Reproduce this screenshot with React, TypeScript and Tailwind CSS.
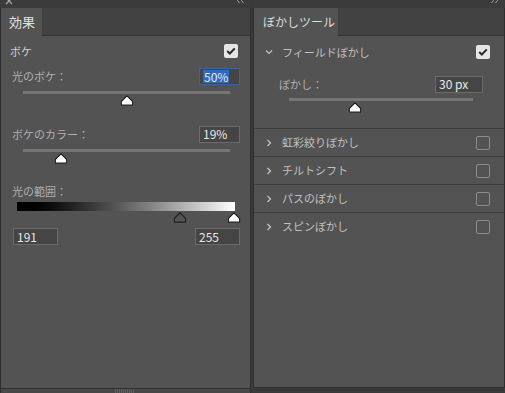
import React from "react";

const font = { fontFamily: '"Noto Sans CJK JP", "Noto Sans", sans-serif' };

const Thumb = ({ dark = false }: { dark?: boolean }) => (
  <svg width="13" height="11" viewBox="0 0 13 11">
    <path
      d="M6.5 0.8 L11.8 6.2 Q12.2 6.7 12.2 7.4 L12.2 9.4 Q12.2 10.2 11.4 10.2 L1.6 10.2 Q0.8 10.2 0.8 9.4 L0.8 7.4 Q0.8 6.7 1.2 6.2 Z"
      fill={dark ? "#535353" : "#ffffff"}
      stroke="#1e1e1e"
      strokeWidth="1.2"
    />
  </svg>
);

const Check = ({ on }: { on: boolean }) =>
  on ? (
    <div className="w-[14px] h-[14px] rounded-[2px] bg-[#e6e6e6] flex items-center justify-center">
      <svg width="10" height="8" viewBox="0 0 10 8">
        <path d="M1.2 4 L3.8 6.5 L8.8 1.4" fill="none" stroke="#2a2a2a" strokeWidth="2" />
      </svg>
    </div>
  ) : (
    <div className="w-[14px] h-[14px] rounded-[2px] border border-[#8c8c8c]" />
  );

const Chevron = ({ open }: { open?: boolean }) => (
  <svg width="8" height="8" viewBox="0 0 8 8">
    {open ? (
      <path d="M1 2.5 L4 5.5 L7 2.5" fill="none" stroke="#c4c4c4" strokeWidth="1.2" />
    ) : (
      <path d="M2.5 1 L5.5 4 L2.5 7" fill="none" stroke="#c4c4c4" strokeWidth="1.2" />
    )}
  </svg>
);

const Slider = ({ pos, className }: { pos: number; className: string }) => (
  <div className={"relative " + className}>
    <div className="h-[3px] bg-[#757575]" />
    <div className="absolute top-[4px] -translate-x-1/2" style={{ left: pos }}>
      <Thumb />
    </div>
  </div>
);

const Field = ({ value, w, focus }: { value: string; w: string; focus?: boolean }) => (
  <div
    className={
      "h-[17px] flex items-center px-[3px] text-[12px] text-[#e8e8e8] bg-[#454545] border " +
      w +
      (focus ? " border-[#1f66d6]" : " border-[#6a6a6a]")
    }
  >
    {focus ? <span className="bg-[#2b6bc4] leading-[13px] px-[1px]">{value}</span> : value}
  </div>
);

// tiny glyphs in the cut-off title strip
const CloseMark = () => (
  <svg width="8" height="8" viewBox="0 0 8 8">
    <path d="M1 0 L7 6 M7 0 L1 6" stroke="#a8a8a8" strokeWidth="1.2" />
  </svg>
);

const Arrows = ({ dir }: { dir: "left" | "right" }) => (
  <svg width="9" height="8" viewBox="0 0 9 8">
    {dir === "left" ? (
      <path d="M3.5 1 L1.5 3.5 L3.5 6 M7.5 1 L5.5 3.5 L7.5 6" fill="none" stroke="#a8a8a8" strokeWidth="1" />
    ) : (
      <path d="M1.5 1 L3.5 3.5 L1.5 6 M5.5 1 L7.5 3.5 L5.5 6" fill="none" stroke="#a8a8a8" strokeWidth="1" />
    )}
  </svg>
);

const TopBar = ({ close, dir }: { close?: boolean; dir: "left" | "right" }) => (
  <div className="h-[8px] bg-[#3b3b3b] flex items-start justify-between pl-[5px] pr-[6px] overflow-hidden">
    <div className="-mt-[2px]">{close && <CloseMark />}</div>
    <div className="-mt-[3px]">
      <Arrows dir={dir} />
    </div>
  </div>
);

const Row = ({ label }: { label: string }) => (
  <div className="h-[28px] border-t border-[#3e3e3e] flex items-center pl-[11px] pr-[14px]">
    <Chevron />
    <span className="ml-[9px] text-[11px] text-[#c0c0c0]">{label}</span>
    <div className="ml-auto">
      <Check on={false} />
    </div>
  </div>
);

export default function App() {
  return (
    <div className="w-[505px] h-[393px] bg-[#393939] flex gap-[2px] overflow-hidden" style={font}>
      {/* left panel */}
      <div className="w-[251px] flex flex-col">
        <TopBar close dir="left" />
        <div className="flex-1 flex flex-col border-l border-[#2e2e2e] border-r">
          <div className="h-[28px] bg-[#424242] flex border-b border-[#363636]">
            <div className="w-[41px] bg-[#535353] flex items-center pl-[8px] text-[13px] text-[#e0e0e0] -mb-[1px]">
              効果
            </div>
          </div>
          <div className="flex-1 bg-[#535353] flex flex-col text-[11px] text-[#c2c2c2]">
            <div className="flex items-center justify-between pl-[9px] pr-[12px] pt-[7px]">
              <span className="text-[#d0d0d0]">ボケ</span>
              <Check on />
            </div>
            <div className="flex items-center justify-between pl-[11px] pr-[10px] mt-[8px]">
              <span className="text-[#b0b0b0]">光のボケ：</span>
              <Field value="50%" w="w-[41px]" focus />
            </div>
            <Slider pos={104} className="ml-[22px] mr-[20px] mt-[6px] h-[24px]" />
            <div className="flex items-center justify-between pl-[11px] pr-[10px] mt-[11px]">
              <span className="text-[#b0b0b0]">ボケのカラー：</span>
              <Field value="19%" w="w-[41px]" />
            </div>
            <Slider pos={38} className="ml-[22px] mr-[20px] mt-[6px] h-[24px]" />
            <div className="pl-[11px] mt-[10px] text-[#b0b0b0]">光の範囲：</div>
            <div className="relative ml-[16px] mr-[15px] mt-[3px] h-[22px]">
              <div className="h-[9px] bg-gradient-to-r from-black to-white" />
              <div className="absolute top-[10px] left-[163px] -translate-x-1/2">
                <Thumb dark />
              </div>
              <div className="absolute top-[10px] left-[217px] -translate-x-1/2">
                <Thumb />
              </div>
            </div>
            <div className="flex justify-between pl-[12px] pr-[10px] mt-[4px]">
              <Field value="191" w="w-[45px]" />
              <Field value="255" w="w-[45px]" />
            </div>
          </div>
          <div className="h-[1px] bg-[#2e2e2e]" />
        </div>
        <div className="h-[4px] bg-[#474747] border-l border-r border-[#2e2e2e] flex justify-center">
          <div className="w-[19px] h-[4px] bg-[repeating-linear-gradient(90deg,#5e5e5e_0_1px,transparent_1px_2px)] -ml-[2px]" />
        </div>
      </div>

      {/* right panel */}
      <div className="w-[252px] flex flex-col">
        <TopBar dir="right" />
        <div className="h-[380px] flex flex-col border border-t-0 border-[#2e2e2e]">
          <div className="h-[28px] bg-[#424242] flex border-b border-[#363636]">
            <div className="w-[84px] bg-[#535353] flex items-center pl-[9px] text-[12px] text-[#dcdcdc] -mb-[1px]">
              ぼかしツール
            </div>
          </div>
          <div className="flex-1 bg-[#535353] flex flex-col">
            <div className="h-[92px] flex flex-col">
              <div className="flex items-center pl-[11px] pr-[14px] pt-[8px]">
                <Chevron open />
                <span className="ml-[9px] text-[11px] text-[#c0c0c0]">フィールドぼかし</span>
                <div className="ml-auto">
                  <Check on />
                </div>
              </div>
              <div className="flex items-center justify-between pl-[25px] pr-[21px] mt-[15px] text-[11px] text-[#b0b0b0]">
                <span>ぼかし：</span>
                <Field value="30 px" w="w-[48px]" />
              </div>
              <Slider pos={66} className="ml-[35px] mr-[31px] mt-[5px] h-[20px]" />
            </div>
            <Row label="虹彩絞りぼかし" />
            <Row label="チルトシフト" />
            <Row label="パスのぼかし" />
            <Row label="スピンぼかし" />
          </div>
        </div>
      </div>
    </div>
  );
}
